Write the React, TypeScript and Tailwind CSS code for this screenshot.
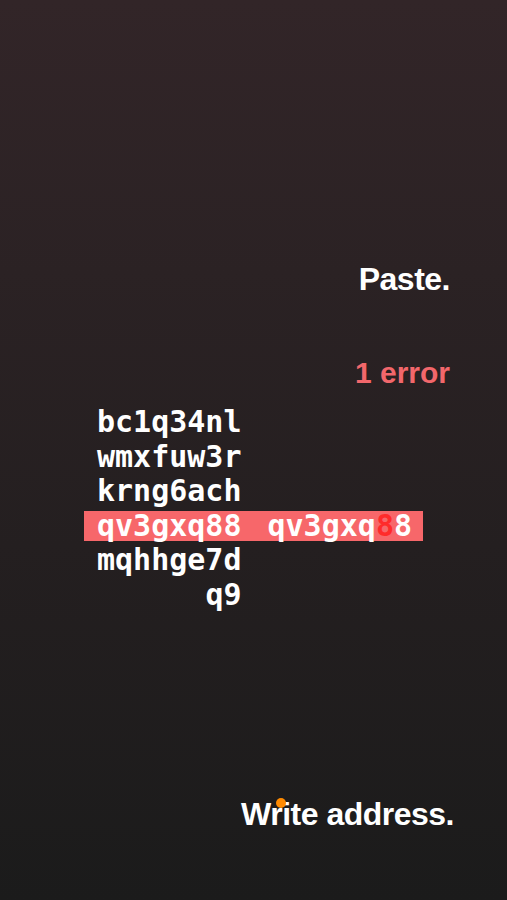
import React from 'react';

const rows = ['bc1q34nl', 'wmxfuw3r', 'krng6ach', 'qv3gxq88', 'mqhhge7d', 'q9'];

export default function App() {
  return (
    <div className="h-[900px] w-full overflow-hidden bg-gradient-to-b from-[#322528] to-[#1b1b1b] pt-[263px] font-['Liberation_Sans',Arial,sans-serif] text-white">
      {/* Title */}
      <div className="pr-[57px] text-right text-[32px] font-bold leading-[32px] tracking-[-0.5px]">Paste.</div>

      {/* Error count */}
      <div className="mt-[63px] pr-[57px] text-right text-[30px] font-bold leading-[30px] text-[#f2676b]">
        1 error
      </div>

      {/* Address chunks */}
      <div className="mt-[17px] pl-[84px] font-['DejaVu_Sans_Mono',monospace] text-[30px] font-bold leading-[34.5px]">
        {rows.map((row, i) =>
          i === 3 ? (
            <div key={row} className="flex h-[34.5px] items-center">
              <div className="flex h-[30px] items-center bg-[#f7676a] pl-[13px] pr-[11px]">
                <span className="w-[144.5px] text-right">{row}</span>
                <span className="ml-[26px] w-[144.5px]">
                  qv3gxq<span className="text-[#ff2b2b]">8</span>8
                </span>
              </div>
            </div>
          ) : (
            <div key={row} className="flex h-[34.5px] items-center pl-[13px]">
              <span className="w-[144.5px] text-right">{row}</span>
            </div>
          )
        )}
      </div>

      {/* Footer prompt */}
      <div className="mt-[186px] flex justify-end pr-[53px]">
        <div className="relative text-[32px] font-bold leading-[32px] tracking-[-0.5px]">
          Write address.
          <span className="absolute left-[35px] top-0 h-[10px] w-[10px] rounded-full bg-[#ff8a00]" />
        </div>
      </div>
    </div>
  );
}
